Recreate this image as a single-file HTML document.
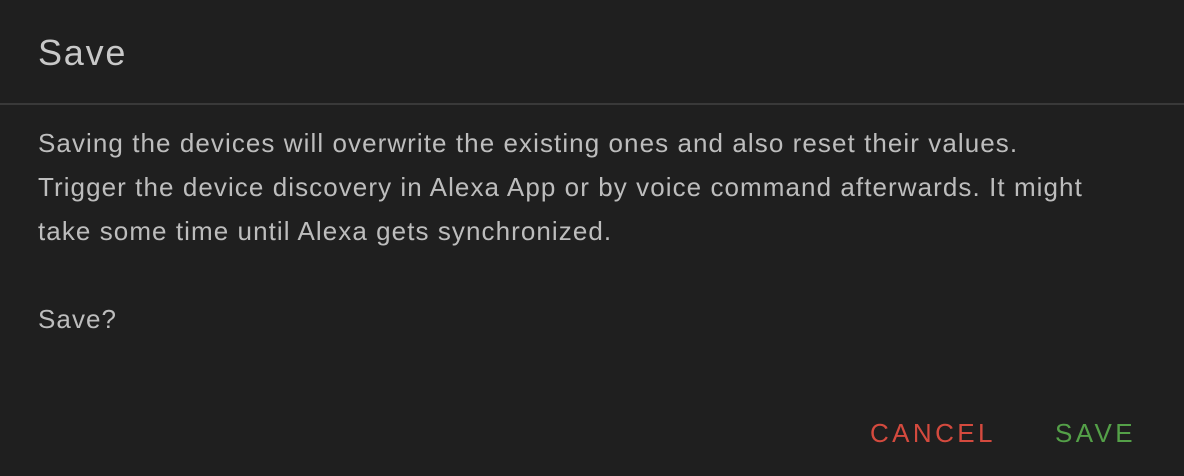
<!DOCTYPE html>
<html><head><style>
html,body{margin:0;padding:0;background:#1f1f1f;width:1184px;height:476px;overflow:hidden;font-family:"Liberation Sans",sans-serif;}
.t{position:absolute;left:38px;top:31px;font-size:36px;color:#c8c8c8;line-height:44px;letter-spacing:1.8px;}
.hr{position:absolute;left:0;top:103px;width:1184px;height:2px;background:#393939;}
.b{position:absolute;left:38px;top:121px;font-size:26px;line-height:44px;color:#bdbdbd;white-space:nowrap;letter-spacing:1.07px;}
.btn{position:absolute;top:416px;font-size:26px;line-height:34px;letter-spacing:3.4px;}
</style></head><body>
<div class="t">Save</div>
<div class="hr"></div>
<div class="b">Saving the devices will overwrite the existing ones and also reset their values.<br>Trigger the device discovery in Alexa App or by voice command afterwards. It might<br>take some time until Alexa gets synchronized.<br><br>Save?</div>
<div class="btn" style="left:870px;color:#d44a3e">CANCEL</div>
<div class="btn" style="left:1055px;color:#54a048">SAVE</div>
</body></html>
